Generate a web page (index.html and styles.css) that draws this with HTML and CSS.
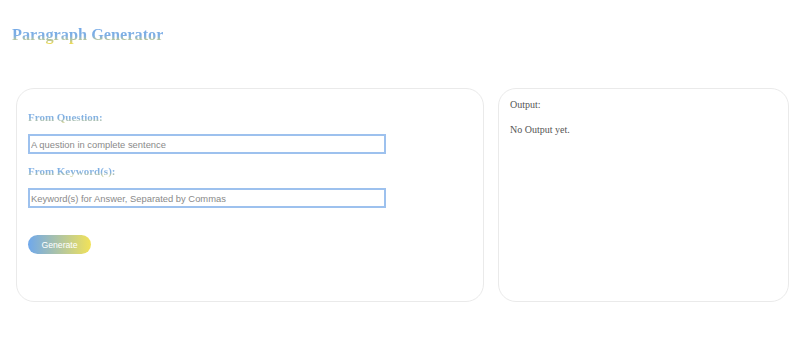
FILE: index.html
```html
<!DOCTYPE html>
<html lang="en">
<head>
    <meta charset="UTF-8">
    <meta name="viewport" content="width=device-width, initial-scale=1.0">
    <title>Paragraph Generator</title>
    <link rel="stylesheet" href="styles.css">
</head>
<body>

<h1 class="title">Paragraph Generator</h1>

<div class="panels">
    <form class="card input-card">
        <label for="question" class="field-label">From Question:</label>
        <input type="text" id="question" name="question" placeholder="A question in complete sentence">

        <label for="keywords" class="field-label">From Keyword(s):</label>
        <input type="text" id="keywords" name="keywords" placeholder="Keyword(s) for Answer, Separated by Commas">

        <button type="button" class="btn-generate">Generate</button>
    </form>

    <div class="card output-card">
        <p class="output-label">Output:</p>
        <p class="output-text">No Output yet.</p>
    </div>
</div>

</body>
</html>
```

FILE: styles.css
```css
body {
    font-family: 'Liberation Serif', 'Times New Roman', serif;
    margin: 0;
    padding: 0 17px 0 16px;
    background: #fff;
}
.title {
    width: fit-content;
    font-size: 16.3px;
    line-height: 19px;
    font-weight: bold;
    margin: 25px 0 0 -4px;
    background: linear-gradient(to bottom, #6fa6e8 0%, #80b0e4 58%, #f2dc4e 100%);
    -webkit-background-clip: text;
    background-clip: text;
    color: transparent;
}
.panels {
    display: flex;
    gap: 14px;
    margin-top: 44px;
}
.card {
    border: 1px solid #eaeaea;
    border-radius: 18px;
    height: 214px;
    box-sizing: border-box;
    padding: 22px 11px 12px;
}
.input-card {
    width: 468px;
}
.output-card {
    flex: 1;
    padding-top: 10px;
}
.field-label {
    display: block;
    width: fit-content;
    font-size: 11px;
    line-height: 13px;
    font-weight: bold;
    background: linear-gradient(to bottom, #76aae6 0%, #84b2e2 55%, #e6d872 100%);
    -webkit-background-clip: text;
    background-clip: text;
    color: transparent;
}
input {
    display: block;
    width: 358px;
    height: 20px;
    box-sizing: border-box;
    margin: 10px 0 11px;
    padding: 0 1px;
    border: 2px solid #9dc1ee;
    font-family: 'Liberation Sans', Arial, sans-serif;
    font-size: 9.4px;
    outline: none;
}
input::placeholder {
    color: #8a8a8a;
}
.btn-generate {
    display: block;
    margin-top: 27px;
    width: 63px;
    height: 19px;
    border: none;
    border-radius: 10px;
    background: linear-gradient(to right, #6fa8ec, #f2e258);
    color: #fff;
    font-family: 'Liberation Sans', Arial, sans-serif;
    font-size: 8.7px;
    cursor: pointer;
}
.output-label, .output-text {
    font-size: 10px;
    line-height: 12px;
    color: #555;
    margin: 0;
}
.output-text {
    margin-top: 13px;
}
```
